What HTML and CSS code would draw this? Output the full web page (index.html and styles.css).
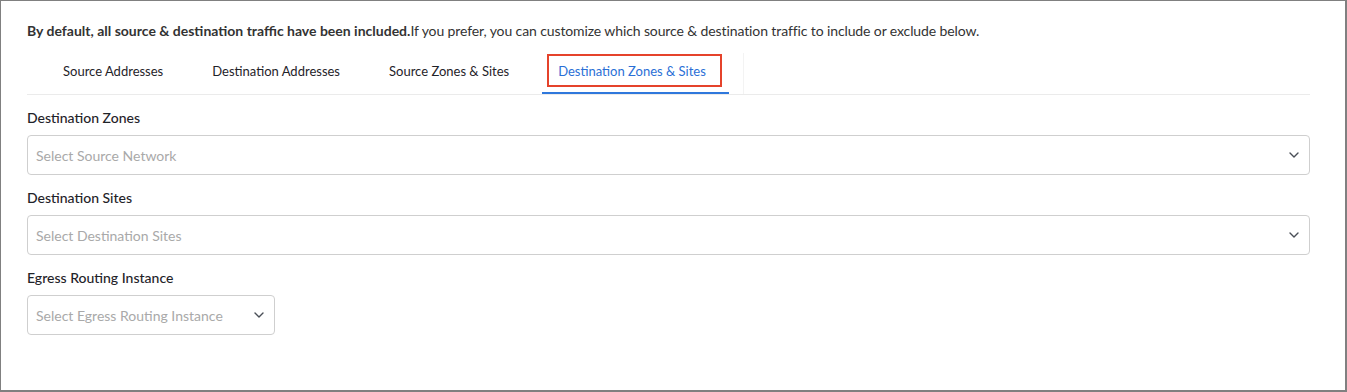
FILE: index.html
```html
<!DOCTYPE html>
<html lang="en">
<head>
    <meta charset="UTF-8">
    <meta name="viewport" content="width=device-width, initial-scale=1.0">
    <title>Traffic Filters</title>
    <link rel="stylesheet" href="styles.css">
</head>
<body>

    <div class="frame">
        <p class="intro"><strong>By default, all source &amp; destination traffic have been included.</strong><span class="rest">If you prefer, you can customize which source &amp; destination traffic to include or exclude below.</span></p>

        <div class="tabs">
            <div class="tab">Source Addresses</div>
            <div class="tab">Destination Addresses</div>
            <div class="tab">Source Zones &amp; Sites</div>
            <div class="tab active">Destination Zones &amp; Sites<span class="highlight"></span></div>
            <div class="tabs-end"></div>
        </div>

        <div class="field">
            <label class="field-label">Destination Zones</label>
            <div class="select">
                <span class="placeholder">Select Source Network</span>
                <svg class="chevron" width="10" height="6" viewBox="0 0 10 6"><path d="M1 1l4 4 4-4" fill="none" stroke="#4a4f57" stroke-width="1.4" stroke-linecap="round" stroke-linejoin="round"/></svg>
            </div>
        </div>

        <div class="field">
            <label class="field-label">Destination Sites</label>
            <div class="select">
                <span class="placeholder">Select Destination Sites</span>
                <svg class="chevron" width="10" height="6" viewBox="0 0 10 6"><path d="M1 1l4 4 4-4" fill="none" stroke="#4a4f57" stroke-width="1.4" stroke-linecap="round" stroke-linejoin="round"/></svg>
            </div>
        </div>

        <div class="field">
            <label class="field-label">Egress Routing Instance</label>
            <div class="select small">
                <span class="placeholder">Select Egress Routing Instance</span>
                <svg class="chevron" width="10" height="6" viewBox="0 0 10 6"><path d="M1 1l4 4 4-4" fill="none" stroke="#4a4f57" stroke-width="1.4" stroke-linecap="round" stroke-linejoin="round"/></svg>
            </div>
        </div>
    </div>

</body>
</html>
```

FILE: styles.css
```css
body {
    margin: 0;
    font-family: Lato, "Open Sans", Arial, sans-serif;
    background: white;
    color: #333;
}

.frame {
    height: 392px;
    box-sizing: border-box;
    border: 1px solid #808080;
    border-right-width: 2px;
    border-bottom-width: 2px;
    padding: 20px 35px 0 26px;
}

.intro {
    margin: 0;
    font-size: 14px;
    line-height: 20px;
    color: #333;
}

.intro strong {
    font-weight: 700;
}

.intro .rest {
    letter-spacing: -0.11px;
}

.tabs {
    display: flex;
    gap: 17px;
    margin-top: 12px;
    padding-left: 20px;
    border-bottom: 1px solid #ebebeb;
}

.tab {
    position: relative;
    padding: 0 16px;
    height: 39px;
    line-height: 36px;
    font-size: 13px;
    color: #1f2329;
    border-bottom: 2px solid transparent;
}

.tab.active {
    padding-right: 23px;
    color: #2a6fd6;
    border-bottom-color: #2f78dc;
}

.highlight {
    position: absolute;
    left: 5px;
    right: 7px;
    top: 1px;
    bottom: 5px;
    border: 2px solid #e5432b;
}

.tabs-end {
    margin-left: -3px;
    border-left: 1px solid #f3f3f3;
}

.field {
    margin-top: 13px;
}

.field-label {
    display: block;
    font-size: 14px;
    line-height: 20px;
    font-weight: 500;
    color: #1f2329;
    margin-bottom: 7px;
}

.select {
    display: flex;
    align-items: center;
    justify-content: space-between;
    height: 40px;
    box-sizing: border-box;
    border: 1px solid #cfcfcf;
    border-radius: 4px;
    padding: 0 10px 0 8px;
}

.select.small {
    width: 248px;
}

.placeholder {
    font-size: 14px;
    color: #a9a9a9;
}

.chevron {
    display: block;
}
```
